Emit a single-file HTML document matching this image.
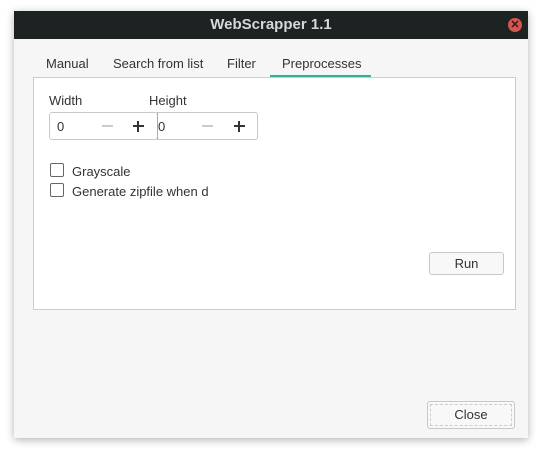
<!DOCTYPE html><html><head><style>
body{margin:0;width:548px;height:456px;background:#fff;font-family:"Liberation Sans",sans-serif;font-size:13px;color:#333;position:relative;overflow:hidden}
.win{position:absolute;left:14px;top:11px;width:514px;height:427px;background:#f6f6f6;box-shadow:0 2px 8px rgba(0,0,0,.3)}
.tb{position:absolute;left:0;top:0;width:514px;height:28px;background:#1d2223;color:#d8d8d8;font-weight:bold;font-size:15px;text-align:center;line-height:28px}
.x{position:absolute;right:6px;top:7px;width:14px;height:14px;border-radius:50%;background:#d9534f;color:#2a1a1a;font-size:11px;line-height:14px;text-align:center}
.a{position:absolute;white-space:nowrap}
.panel{position:absolute;left:33px;top:77px;width:481px;height:231px;background:#fff;border:1px solid #ccc}
.btn{position:absolute;border:1px solid #c8c8c8;border-radius:3px;background:#f8f8f8;text-align:center}
.cb{position:absolute;width:12px;height:12px;border:1px solid #666;border-radius:2px;background:#fff}
</style></head><body>
<div class="win">
<div class="tb">WebScrapper 1.1<div class="x">✕</div></div>
</div>
<div class="a" style="left:46px;top:56px">Manual</div>
<div class="a" style="left:113px;top:56px">Search from list</div>
<div class="a" style="left:227px;top:56px">Filter</div>
<div class="a" style="left:282px;top:56px">Preprocesses</div>
<div class="a" style="left:270px;top:75px;width:101px;height:2px;background:#2eb398"></div>
<div class="panel"></div>
<div class="a" style="left:49px;top:93px">Width</div>
<div class="a" style="left:149px;top:93px">Height</div>
<div class="a" style="left:49px;top:112px;width:107px;height:26px;border:1px solid #c8c8c8;border-radius:3px;background:#fff"></div>
<div class="a" style="left:157px;top:112px;width:99px;height:26px;border:1px solid #c8c8c8;border-left:1px solid #aaa;border-radius:0 3px 3px 0;background:#fff"></div>
<div class="a" style="left:57px;top:119px">0</div>
<div class="a" style="left:102px;top:125px;width:11px;height:2px;background:#ccc"></div>
<div class="a" style="left:133px;top:125px;width:11px;height:2px;background:#333"></div>
<div class="a" style="left:137px;top:121px;width:2px;height:11px;background:#333"></div>
<div class="a" style="left:158px;top:119px">0</div>
<div class="a" style="left:202px;top:125px;width:11px;height:2px;background:#ccc"></div>
<div class="a" style="left:234px;top:125px;width:11px;height:2px;background:#333"></div>
<div class="a" style="left:238px;top:121px;width:2px;height:11px;background:#333"></div>
<div class="cb" style="left:50px;top:163px"></div>
<div class="a" style="left:72px;top:164px">Grayscale</div>
<div class="cb" style="left:50px;top:183px"></div>
<div class="a" style="left:72px;top:184px">Generate zipfile when d</div>
<div class="btn" style="left:429px;top:252px;width:73px;height:21px;line-height:21px">Run</div>
<div class="btn" style="left:427px;top:401px;width:86px;height:26px;line-height:26px;outline:1px dashed #ccc;outline-offset:-4px">Close</div>
</body></html>
